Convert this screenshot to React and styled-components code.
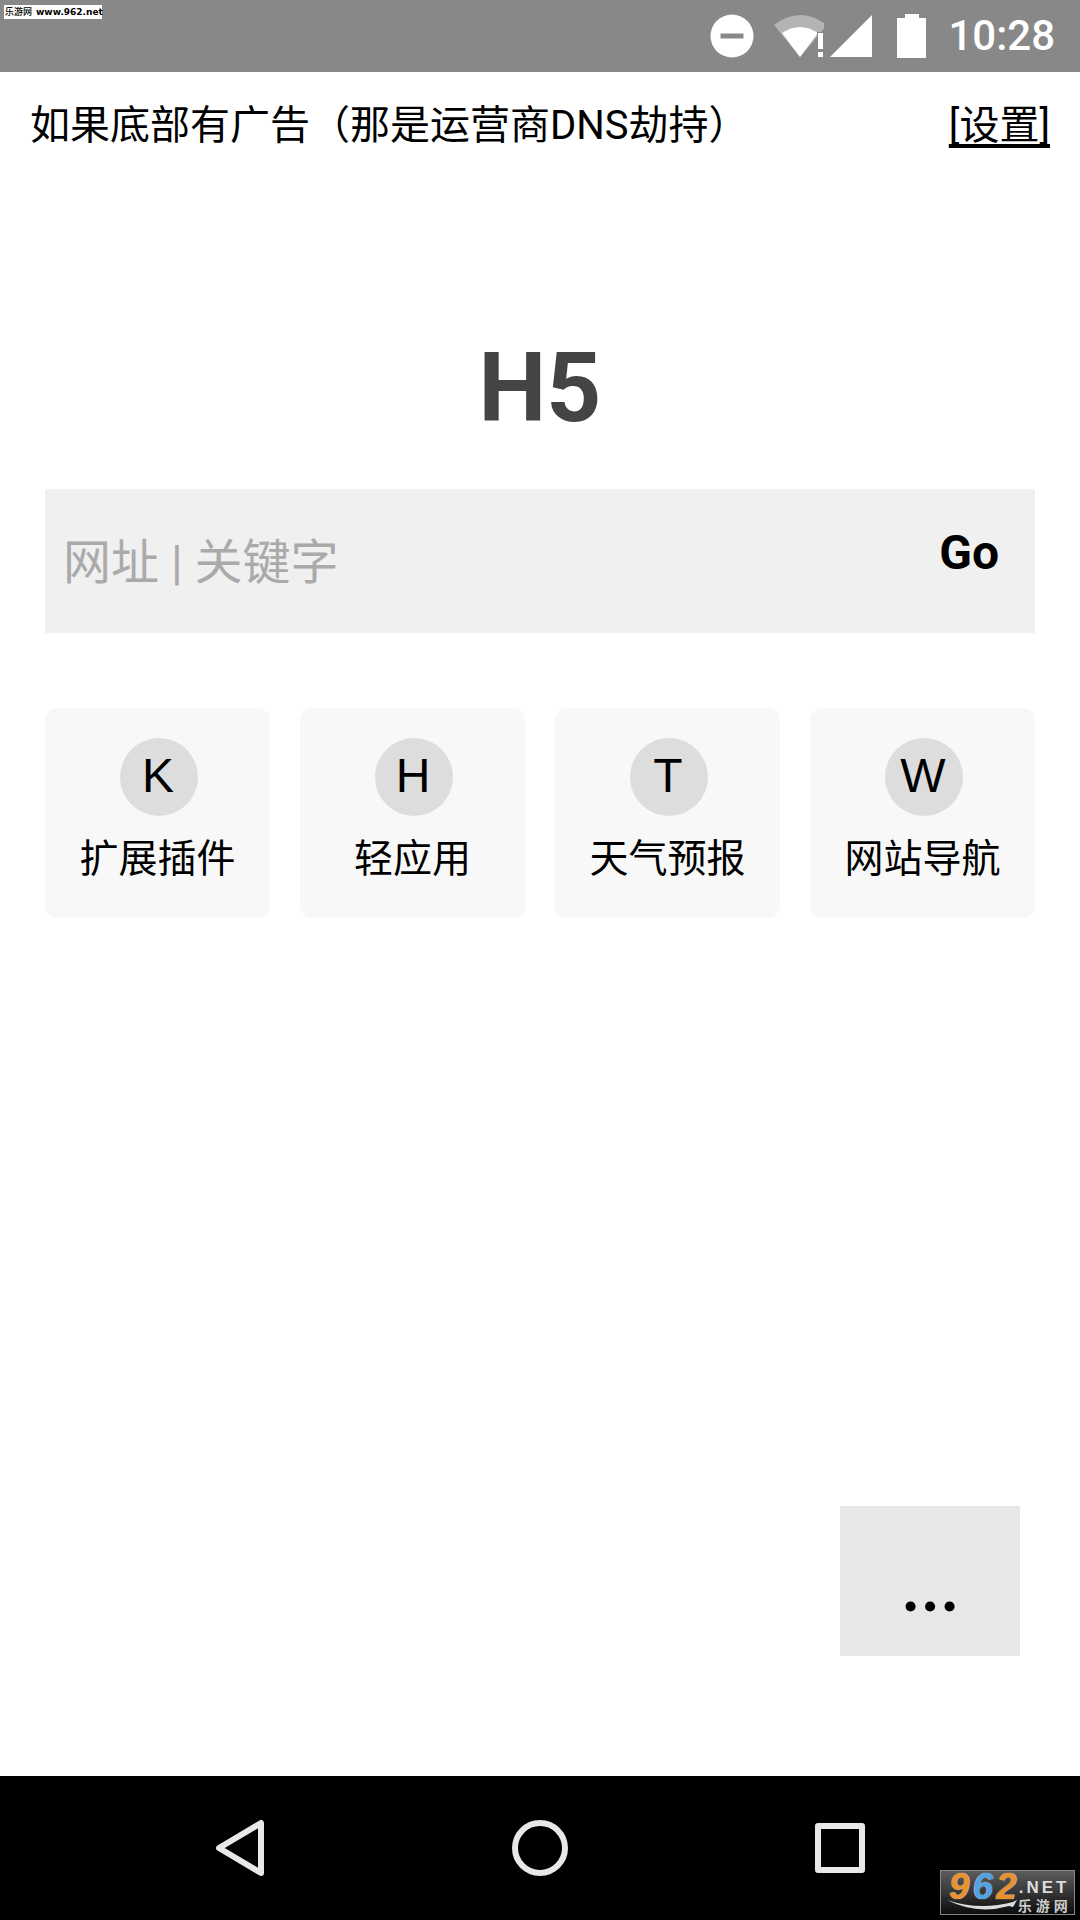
import React from 'react';
import styled, { createGlobalStyle } from 'styled-components';

const GlobalStyle = createGlobalStyle`
    html, body {
        margin: 0;
        padding: 0;
        background: #fff;
    }
    * {
        box-sizing: border-box;
    }
`;

const Page = styled.div`
    position: relative;
    width: 1080px;
    height: 1920px;
    display: flex;
    flex-direction: column;
    overflow: hidden;
    background: #fff;
    color: #000;
    font-family: Roboto, "Noto Sans CJK SC", sans-serif;
`;

const StatusBar = styled.div`
    height: 72px;
    flex: none;
    display: flex;
    align-items: center;
    justify-content: flex-end;
    padding-right: 25px;
    background: #888;
`;

const StatusIcon = styled.svg`
    display: block;
    flex: none;
    margin-right: ${props => props.$gap}px;
`;

const Clock = styled.span`
    font-size: 42px;
    font-weight: 500;
    line-height: 72px;
    color: #fff;
`;

const Watermark = styled.div`
    position: absolute;
    left: 4px;
    top: 5px;
    width: 98px;
    height: 14px;
    display: flex;
    align-items: center;
    gap: 4px;
    padding-left: 1px;
    background: #fff;
    color: #000;
    font-size: 9px;
    font-weight: 500;
    line-height: 14px;
    white-space: nowrap;
`;

const WatermarkUrl = styled.span`
    font-family: "DejaVu Sans", sans-serif;
    font-size: 9px;
    font-weight: 700;
`;

const Main = styled.main`
    flex: 1;
    display: flex;
    flex-direction: column;
`;

const TopRow = styled.div`
    height: 104px;
    flex: none;
    display: flex;
    align-items: center;
    justify-content: space-between;
    padding: 4px 30px 0;
    font-size: 40px;
    line-height: 100px;
`;

const SettingsLink = styled.a`
    color: #000;
    text-decoration: underline;
    text-decoration-skip-ink: none;
    text-underline-offset: 5px;
`;

const Title = styled.h1`
    margin: 0;
    padding-top: 147px;
    height: 313px;
    text-align: center;
    font-size: 96px;
    font-weight: 700;
    line-height: 130px;
    color: #444;
`;

const SearchBar = styled.form`
    height: 144px;
    margin: 0 45px;
    flex: none;
    display: flex;
    align-items: center;
    padding: 0 36px 0 18px;
    background: #f0f0f0;
`;

const SearchInput = styled.input`
    flex: 1;
    min-width: 0;
    height: 70px;
    margin-top: 2px;
    padding: 0;
    border: 0;
    outline: 0;
    background: transparent;
    font-family: inherit;
    font-size: 48px;
    color: #000;

    &::placeholder {
        color: #aaa;
        opacity: 1;
    }
`;

const GoButton = styled.button`
    margin-top: -18px;
    padding: 0;
    border: 0;
    background: transparent;
    font-family: inherit;
    font-size: 48px;
    font-weight: 700;
    color: #000;
`;

const Shortcuts = styled.div`
    margin: 75px 45px 0;
    display: grid;
    grid-template-columns: repeat(4, 225px);
    gap: 30px;
`;

const Card = styled.a`
    height: 210px;
    display: flex;
    flex-direction: column;
    align-items: center;
    padding-top: 30px;
    border-radius: 12px;
    background: #f8f8f8;
    color: #000;
`;

const Badge = styled.span`
    width: 78px;
    height: 78px;
    margin-left: 3px;
    padding: 0 2px 3px 0;
    display: flex;
    align-items: center;
    justify-content: center;
    border-radius: 50%;
    background: #ddd;
    font-family: "Liberation Sans", sans-serif;
    font-size: 48px;
`;

const CardLabel = styled.span`
    margin-top: 19px;
    font-size: 39px;
    line-height: 48px;
`;

const MoreRow = styled.div`
    margin-top: auto;
    padding: 0 60px 120px 0;
    display: flex;
    justify-content: flex-end;
`;

const MoreButton = styled.button`
    width: 180px;
    height: 150px;
    padding: 9px 0 0 4px;
    border: 0;
    background: #e7e7e7;
    font-family: Lato, sans-serif;
    font-size: 66px;
    font-weight: 700;
    letter-spacing: 3.8px;
    color: #000;
`;

const NavBar = styled.nav`
    height: 144px;
    flex: none;
    display: flex;
    align-items: center;
    justify-content: center;
    gap: 240px;
    background: #000;
`;

const NavIcon = styled.svg`
    display: block;
    fill: none;
    stroke: #e8e8e8;
    stroke-width: 6;
    stroke-linejoin: round;
`;

const Logo = styled.div`
    position: absolute;
    left: 940px;
    top: 1870px;
    width: 135px;
    height: 45px;
    display: flex;
    padding: 2px 0 0 8px;
    border: 1px solid #888;
    background: linear-gradient(#5c5c5c, #3a3a3a 45%, #0c0c0c);
    white-space: nowrap;
`;

const LogoDigits = styled.div`
    font-family: "Liberation Sans", sans-serif;
    font-size: 37px;
    font-style: italic;
    font-weight: 700;
    line-height: 28px;
    letter-spacing: 3px;
    color: #e8912d;
    text-shadow: 0 0 1px #fff;
`;

const LogoBlue = styled.span`
    color: #4fa3e0;
`;

const LogoText = styled.div`
    display: flex;
    flex-direction: column;
    margin-left: -3px;
    padding-top: 6px;
    color: #ddd;
`;

const LogoNet = styled.span`
    padding-left: 2px;
    font-family: "Liberation Sans", sans-serif;
    font-size: 17px;
    font-weight: 700;
    line-height: 18px;
    letter-spacing: 3px;
`;

const LogoCn = styled.span`
    padding-left: 1px;
    font-size: 14px;
    font-weight: 700;
    line-height: 18px;
    letter-spacing: 4px;
    color: #ccc;
`;

const LogoSwoosh = styled.svg`
    position: absolute;
    left: 6px;
    bottom: 1px;
`;

const shortcuts = [
    { letter: 'K', label: '扩展插件' },
    { letter: 'H', label: '轻应用' },
    { letter: 'T', label: '天气预报' },
    { letter: 'W', label: '网站导航' },
];

const App = () => {
    return (
        <Page>
            <GlobalStyle />
            <StatusBar>
                <StatusIcon $gap={20} width="44" height="44" viewBox="0 0 44 44">
                    <circle cx="22" cy="22" r="21.5" fill="#fff" />
                    <rect x="10.5" y="19.5" width="23" height="5" fill="#888" />
                </StatusIcon>
                <StatusIcon $gap={6} width="50" height="44" viewBox="0 0 50 44">
                    <path d="M0 11 Q26 -9 53 11 L26 43 Z" fill="#b4b4b4" />
                    <path d="M8 19 Q26 7 44 19 L26 43 Z" fill="#fff" />
                    <rect x="43" y="18" width="7" height="26" fill="#888" />
                    <rect x="44" y="19" width="5" height="16" fill="#fff" />
                    <rect x="44" y="38" width="5" height="5" fill="#fff" />
                </StatusIcon>
                <StatusIcon $gap={25} width="42" height="42" viewBox="0 0 42 42">
                    <path d="M42 0 V42 H0 Z" fill="#fff" />
                </StatusIcon>
                <StatusIcon $gap={22} width="29" height="44" viewBox="0 0 29 44">
                    <path d="M8 0 H22 V4 H29 V44 H0 V4 H8 Z" fill="#fff" />
                </StatusIcon>
                <Clock>10:28</Clock>
            </StatusBar>
            <Watermark>
                <span>乐游网</span>
                <WatermarkUrl>www.962.net</WatermarkUrl>
            </Watermark>
            <Main>
                <TopRow>
                    <span>如果底部有广告（那是运营商DNS劫持）</span>
                    <SettingsLink>[设置]</SettingsLink>
                </TopRow>
                <Title>H5</Title>
                <SearchBar>
                    <SearchInput placeholder="网址 | 关键字" />
                    <GoButton type="button">Go</GoButton>
                </SearchBar>
                <Shortcuts>
                    {shortcuts.map(item => (
                        <Card key={item.letter}>
                            <Badge>{item.letter}</Badge>
                            <CardLabel>{item.label}</CardLabel>
                        </Card>
                    ))}
                </Shortcuts>
                <MoreRow>
                    <MoreButton type="button">...</MoreButton>
                </MoreRow>
            </Main>
            <NavBar>
                <NavIcon width="60" height="60" viewBox="0 0 60 60">
                    <path d="M9 30 L51 5 V55 Z" />
                </NavIcon>
                <NavIcon width="60" height="60" viewBox="0 0 60 60">
                    <circle cx="30" cy="30" r="25" />
                </NavIcon>
                <NavIcon width="60" height="60" viewBox="0 0 60 60">
                    <rect x="8" y="8" width="44" height="44" />
                </NavIcon>
            </NavBar>
            <Logo>
                <LogoDigits>9<LogoBlue>6</LogoBlue>2</LogoDigits>
                <LogoText>
                    <LogoNet>.NET</LogoNet>
                    <LogoCn>乐游网</LogoCn>
                </LogoText>
                <LogoSwoosh width="72" height="14" viewBox="0 0 72 14">
                    <path d="M0 1 Q32 12 66 3 L70 1 L66 8 L62 7 Q30 16 0 1 Z" fill="#ddd" />
                </LogoSwoosh>
            </Logo>
        </Page>
    );
}

export default App;
